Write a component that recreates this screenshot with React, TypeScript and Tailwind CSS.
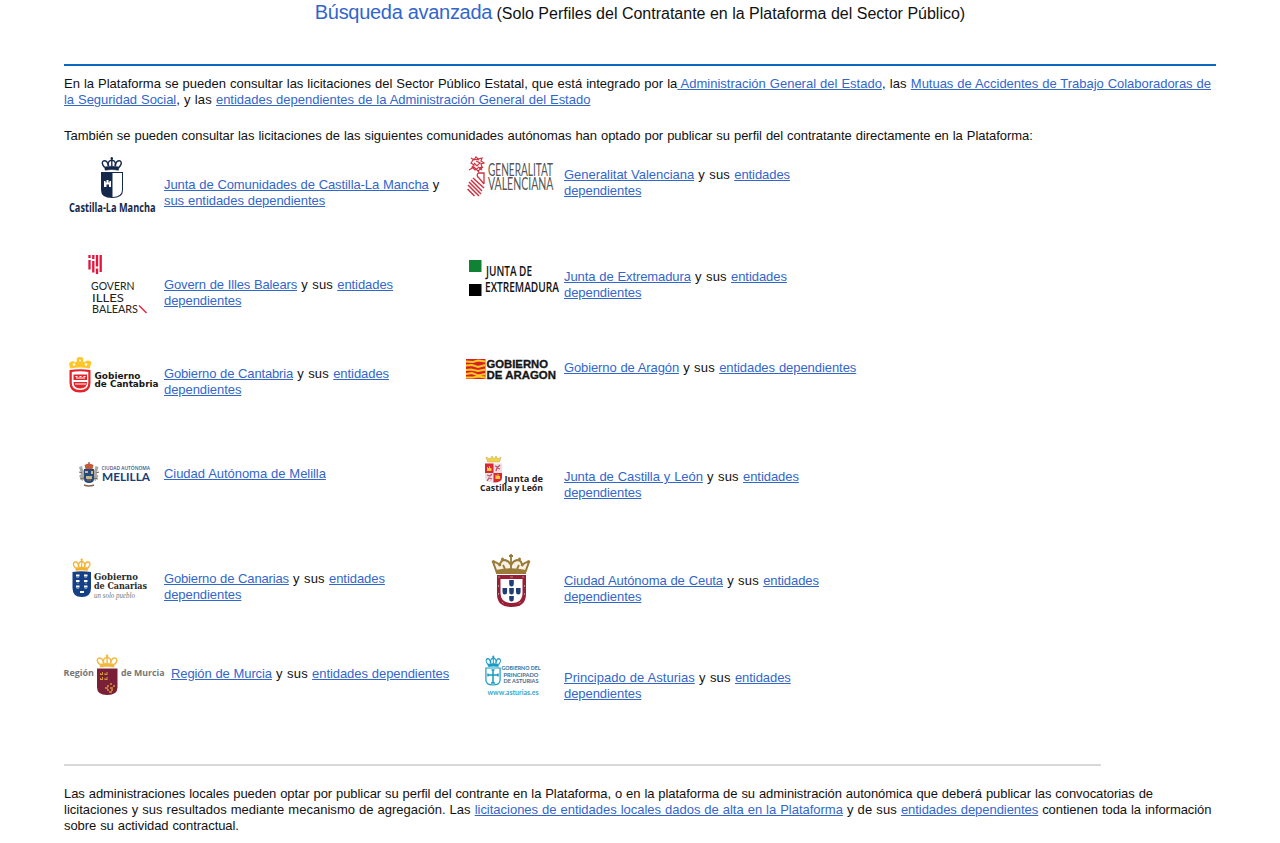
import React from 'react';

type TProps = {
  x: number;
  y: number;
  w: number;
  s: number;
  fill: string;
  children: string;
  weight?: number;
  font?: string;
  italic?: boolean;
};

function T({ x, y, w, s, fill, children, weight = 400, font = 'Open Sans, sans-serif', italic }: TProps) {
  return (
    <text
      x={x}
      y={y}
      textLength={w}
      lengthAdjust="spacingAndGlyphs"
      fontSize={s}
      fontWeight={weight}
      fontFamily={font}
      fontStyle={italic ? 'italic' : 'normal'}
      fill={fill}
    >
      {children}
    </text>
  );
}

function Logo({ children, wide }: { children: React.ReactNode; wide?: boolean }) {
  return (
    <svg
      className={
        wide
          ? 'block h-[70px] w-[107px] shrink-0 overflow-visible [word-spacing:0]'
          : 'block h-[70px] w-[100px] shrink-0 overflow-visible [word-spacing:0]'
      }
      viewBox={wide ? '0 0 107 70' : '0 0 100 70'}
    >
      {children}
    </svg>
  );
}

/* Arched royal crown drawn in a 20x12 box. */
function Crown({ x, y, sx, sy, color }: { x: number; y: number; sx: number; sy: number; color: string }) {
  return (
    <g transform={`translate(${x} ${y}) scale(${sx} ${sy})`} fill="none" stroke={color}>
      <path
        d="M3 8.5C-1 5 1 2.6 4 3.2Q6 3.6 6.5 7.5M17 8.5C21 5 19 2.6 16 3.2Q14 3.6 13.5 7.5M7 7.5C5.5 4 8 2.6 10 2.6S14.5 4 13 7.5M10 0v8M8.8 1.2h2.4"
        strokeWidth="1.3"
      />
      <path d="M3 8.2q7-1.4 14 0l-.6 2.6q-6.4-1.2-12.8 0z" fill={color} strokeWidth=".5" />
    </g>
  );
}

const CastillaLaMancha = () => (
  <Logo>
    <Crown x={37.5} y={7} sx={1.03} sy={1.22} color="#14284b" />
    <path d="M37 22h22v18q0 8-11 8t-11-8z" fill="#14284b" />
    <path d="M48.5 23h9.5v17q0 6.5-9.5 7z" fill="#fff" />
    <path d="M40 37v-6h1.5v1.5h1V30h2v2.5h1V31H47v6h-2v-2.5h-2.5V37z" fill="#fff" />
    <T x={5} y={61.7} w={86.5} s={11.8} weight={700} fill="#14284b">Castilla-La Mancha</T>
  </Logo>
);

const Valenciana = () => (
  <Logo>
    <g fill="none" stroke="#cf3240" strokeWidth="1.2">
      <path d="M7 8l3 2 2-3 2 2 4-1-1 3 3 2-3 1 1 3-3 1M9 10l-2 3 3 2-2 2 3 3 3-2M12 11l4 2-3 3-3-3M5 20l5-3 4 4 5-4M9 9l6 1M14 17l4 3M12 19l3 3" />
      <path d="M14 23h6v11M14 23q-2 3 1 5l5 6" strokeWidth="1.3" />
      <path d="M9 28l11 10M7 30l11 11M5 32l12 12M4 35l11 11M3.5 39l7 7" strokeWidth="1.5" />
    </g>
    <T x={24} y={25.8} w={65} s={17.6} fill="#555" font="Lato, sans-serif">GENERALITAT</T>
    <T x={24} y={40} w={65.5} s={17.6} fill="#555" font="Lato, sans-serif">VALENCIANA</T>
  </Logo>
);

const Balears = () => (
  <Logo>
    <g fill="none" stroke="#e4153d" strokeWidth="2.3">
      <path d="M25.5 10v9.5M29.3 11v11.5M33 5v11.5M36.7 5v17" />
      <path d="M25.5 5v3M29.3 5v4M33 18.5v5.5" />
    </g>
    <T x={27} y={40.4} w={43.5} s={12.2} fill="#222" font="Lato, sans-serif">GOVERN</T>
    <T x={28} y={52} w={32} s={12.2} fill="#222" font="Lato, sans-serif">ILLES</T>
    <T x={28} y={63.4} w={46} s={12.2} fill="#222" font="Lato, sans-serif">BALEARS</T>
    <path d="M75 55.5l7.5 7.5" stroke="#e4153d" strokeWidth="1.2" />
  </Logo>
);

const Extremadura = () => (
  <Logo>
    <path d="M5 10h12.5v12H5z" fill="#118233" />
    <path d="M5 34h12.5v12H5z" fill="#000" />
    <T x={22} y={25.5} w={46} s={14.6} weight={600} fill="#111">JUNTA DE</T>
    <T x={21} y={42.3} w={74} s={14.8} weight={600} fill="#111">EXTREMADURA</T>
  </Logo>
);

const Cantabria = () => (
  <Logo>
    <path
      d="M6 18.5l-1-5q2-3 5-2l2 1 1-2.5-.5-1.5Q14.5 6.5 16 7q3 0 3.5 1.5L19 10l1 2.5q3-3 6-1.5 2 1 .8 3.5l-1 4q-10-2-19.8 0z"
      fill="#ffc629"
    />
    <circle cx="10" cy="14.5" r="1.3" fill="#fff" />
    <circle cx="22" cy="14.5" r="1.3" fill="#fff" />
    <circle cx="16" cy="10.5" r="1" fill="#fff" />
    <path d="M5.5 20q10.5-1.5 21 0v13q0 9.5-10.5 9.5T5.5 33z" fill="#e3242b" />
    <path d="M7.8 22q8-1.3 16.5 0v11q0 7-8.25 7t-8.25-7z" fill="#fff" />
    <path d="M9.5 24.5h13.5v5.5H9.5zM9.5 32h13.5q0 6.5-6.75 6.5T9.5 32z" fill="#e3242b" />
    <path d="M11.5 26.5h2m2 0h2m2 0h2M12 28h9M11 34h11" stroke="#fff" strokeWidth="1" />
    <T x={30.5} y={29} w={46} s={9.2} weight={700} fill="#171717" font="DejaVu Sans, sans-serif">Gobierno</T>
    <T x={30.5} y={37.3} w={64} s={9.2} weight={700} fill="#171717" font="DejaVu Sans, sans-serif">de Cantabria</T>
  </Logo>
);

const Aragon = () => (
  <Logo>
    <path d="M2 9h19.500v20H2z" fill="#d51f2b" />
    <path
      d="M2 11.5l7 .5 5-1.5 7.5 1M2 15.5l6-.5 6 2 7.5-2M2 20l5-.5 7 1.5 7.5-1.5M2 24l6-1 6 2.500 7.500-1.500M2 27.500h7l5-1 7.500 1"
      fill="none"
      stroke="#fbc91f"
      strokeWidth="2"
    />
    <g stroke="#161616" strokeWidth=".35">
      <T x={22.5} y={18.3} w={61.5} s={11.6} weight={700} fill="#161616" font="Liberation Sans, sans-serif">GOBIERNO</T>
      <T x={22.5} y={28.5} w={69.5} s={11.6} weight={700} fill="#161616" font="Liberation Sans, sans-serif">DE ARAGON</T>
    </g>
  </Logo>
);

const Melilla = () => (
  <Logo>
    <path d="M25 12v3" stroke="#a87542" strokeWidth="1.5" />
    <path d="M20.5 15q4.5-3 9 0l-1 4h-7z" fill="#c45a37" />
    <path d="M15 17l3-1 1 4 2 1v8l-3 2-3-5 2-2zM34.5 17l-3-1-1 4-2 1v8l3 2 3-5-2-2z" fill="#a8aaa9" />
    <path d="M15 22l3 1M35 22l-3 1M16 29l4-1M34 29l-4-1" stroke="#7b6651" strokeWidth="1" />
    <path d="M20 19h10v10q0 4-5 4t-5-4z" fill="#28487c" />
    <path d="M21 21h3v2h-3zM27 21h2v3h-2zM22 26h6v3h-6z" fill="#c7b987" />
    <path d="M23 30h4M20 35q5 2 10 0" stroke="#8a604f" strokeWidth="1.5" fill="none" />
    <T x={37.5} y={20} w={48.5} s={5.8} weight={600} fill="#34558c">CIUDAD AUTÓNOMA</T>
    <T x={38} y={31.3} w={48} s={12.2} weight={700} fill="#173d77" font="Lato, sans-serif">MELILLA</T>
  </Logo>
);

const CastillaLeon = () => (
  <Logo>
    <path d="M22 7l1.5 5h12L37 7l-3 2-2-3-2 3-2-3-2 3z" fill="#efd34d" stroke="#c4a34b" strokeWidth=".5" />
    <path d="M21 13.5h17v14q0 5-8.5 5t-8.500-5z" fill="#ecdfe3" />
    <path d="M21 13.5h8.5V23H21zM29.5 23H38v4.500q0 5-8.500 5z" fill="#d72735" />
    <path d="M23 21v-4h1v1h1v-2h1v2h1.5v3zM31.5 29v-4h1v1h1v-2h1v2H36v3z" fill="#f5cf38" />
    <path d="M31 16l3 1 2-2M32 21l1-3 3 1M23 25l3 1 2-2M23 31l2-3 3 1" stroke="#c24e6b" fill="none" strokeWidth="1.3" />
    <T x={40.5} y={32} w={38.5} s={9.2} weight={700} fill="#29211f">Junta de</T>
    <T x={16} y={41.2} w={63} s={9.4} weight={700} fill="#29211f">Castilla y León</T>
  </Logo>
);

const Canarias = () => (
  <Logo>
    <Crown x={8.7} y={8.5} sx={0.9} sy={1.12} color="#f3b12e" />
    <path d="M8.5 22q9-1.5 18.500 0v16q0 9-9.250 9T8.500 38z" fill="#154085" />
    <path d="M12 25.500h3.500m4.500 0h3.500M12 31h3.500m4.500 0h3.500M12 36.500h3.500m4.500 0h3.500M16 42h4" stroke="#fff" strokeWidth="1.8" />
    <path d="M12.500 27.500h2.500m5.500 0h2.500M12.500 33h2.500m5.500 0h2.500M12.500 38.500h2.500m5.500 0h2.500" stroke="#8ba6cf" strokeWidth=".8" />
    <T x={30} y={30.3} w={44} s={9.8} weight={700} fill="#292929" font="DejaVu Serif, serif">Gobierno</T>
    <T x={30} y={39.3} w={53} s={9.8} weight={700} fill="#292929" font="DejaVu Serif, serif">de Canarias</T>
    <T x={30} y={47.5} w={41} s={7.5} italic fill="#777" font="Liberation Serif, serif">un solo pueblo</T>
  </Logo>
);

const Ceuta = () => (
  <Logo>
    <path d="M33 23l-4-11q5 0 7 4 0-6 5-6 4 1 6 5 2-4 6-5 5 0 5 6 2-4 7-4l-4 11z" fill="#f6f1e4" stroke="#9a7a38" strokeWidth="2" />
    <path d="M32 20q15-3.5 30 0v4q-15-3-30 0z" fill="#9a7a38" />
    <path d="M47 4v16M45 6h4M39 15l2 4M55 15l-2 4" stroke="#9a7a38" strokeWidth="1.8" fill="none" />
    <circle cx="29.5" cy="11.5" r="1.5" fill="#9a7a38" />
    <circle cx="38.5" cy="9" r="1.5" fill="#9a7a38" />
    <circle cx="55.5" cy="9" r="1.5" fill="#9a7a38" />
    <circle cx="64.5" cy="11.5" r="1.5" fill="#9a7a38" />
    <path d="M33 25h29v19q0 13-14.5 13T33 44z" fill="#991f36" />
    <path d="M36.5 29h22v14q0 10-11 10t-11-10z" fill="#fff" />
    <path
      d="M45.2 30h4.600v4q0 2.500-2.300 2.500T45.200 34zM45.200 38h4.600v4q0 2.500-2.300 2.500T45.200 42zM45.200 46h4.600v3q0 2.500-2.300 2.500T45.200 49zM38.500 38h4.600v4q0 2.500-2.300 2.500T38.500 42zM52 38h4.600v4q0 2.500-2.300 2.500T52 42z"
      fill="#203f78"
    />
    <path d="M34 27h2m10 0h3m9 0h2M34.5 35v2m0 6v2M60.5 35v2m0 6v2M38 52l1.5 1.5m17-1.5-1.5 1.5" stroke="#c5817e" strokeWidth="1" />
  </Logo>
);

const Murcia = () => (
  <Logo wide>
    <T x={-0.5} y={26.3} w={30.5} s={9.4} weight={700} fill="#777">Región</T>
    <Crown x={32.5} y={4.5} sx={1.06} sy={1.17} color="#f2b83f" />
    <path d="M33 18.5h20.500v19q0 7.500-10.250 7.500T33 37.500z" fill="#792038" />
    <path
      d="M36 25v-2h1v1h1v-2h1v3zm4.500 0v-2h1v1h1v-2h1v3zM36 30v-2h1v1h1v-2h1v3zm4.500 0v-2h1v1h1v-2h1v3z"
      fill="#d59637"
    />
    <path d="M46 34h2m-5 2h2m4 0h2M41 38h3m2 0h3M43 40h2m2 0h2M45 42h3" stroke="#d59637" strokeWidth="1.3" />
    <T x={57} y={26.3} w={43.5} s={9.4} weight={700} fill="#777">de Murcia</T>
  </Logo>
);

const Asturias = () => (
  <Logo>
    <Crown x={21.5} y={5.5} sx={0.78} sy={1.05} color="#189bc4" />
    <path d="M21.9 18h14.200v12q0 5-7.100 5t-7.100-5z" fill="#fff" stroke="#189bc4" strokeWidth="1.2" />
    <path d="M29 19.5v13.500M24 25h10M27.500 20h3M27 33h4M24 23.500v3M34 23.500v3" fill="none" stroke="#189bc4" strokeWidth="1.5" />
    <T x={37.5} y={20} w={39} s={5.5} weight={700} fill="#386d91" font="Lato, sans-serif">GOBIERNO DEL</T>
    <T x={39.5} y={26.7} w={35} s={5.7} weight={700} fill="#386d91" font="Lato, sans-serif">PRINCIPADO</T>
    <T x={39.5} y={33.3} w={35} s={5.7} weight={700} fill="#386d91" font="Lato, sans-serif">DE ASTURIAS</T>
    <T x={23.5} y={45} w={51} s={7} weight={700} fill="#36a9cd" font="Lato, sans-serif">www.asturias.es</T>
  </Logo>
);

function A({ children, track = 'tracking-[-0.02px]' }: { children: React.ReactNode; track?: string }) {
  return (
    <a href="#" className={`text-[#3366cc] underline ${track}`}>
      {children}
    </a>
  );
}

type RegionProps = {
  logo: React.ReactNode;
  pad: string;
  track: string;
  name: string;
  own?: boolean;
  link?: string;
};

function Region({ logo, pad, track, name, own, link }: RegionProps) {
  return (
    <div className="flex h-[100px] w-[400px] items-start">
      {logo}
      <p className={`min-w-0 flex-1 ${pad}`}>
        <A track={track}>{name}</A>
        {link && (
          <>
            <span className="tracking-[0.2px]">{own ? ' y ' : ' y sus '}</span>
            <A track="tracking-[-0.06px]">{link}</A>
          </>
        )}
      </p>
    </div>
  );
}

export default function App() {
  const deps = 'entidades dependientes';
  return (
    <main className="h-[843px] overflow-hidden bg-white px-16 font-['Liberation_Sans',Arial,sans-serif] text-[13px] leading-4 text-[#111] [word-spacing:0.39px]">
      <h1 className="h-16 text-center text-base leading-6 [word-spacing:0]">
        <a href="#" className="text-xl leading-6 tracking-[-0.3px] text-[#3366cc]">Búsqueda avanzada</a> (Solo Perfiles del Contratante en la Plataforma del Sector Público)
      </h1>
      <hr className="h-0.5 border-0 bg-[#0d68bf]" />
      <p className="pt-2.5">
        En la Plataforma se pueden consultar las licitaciones del Sector Público Estatal, que está integrado por la
        <A track="tracking-normal"> Administración General del Estado</A>
        <span className="tracking-[0.12px]">, las </span>
        <A track="tracking-[-0.03px]">Mutuas de Accidentes de Trabajo Colaboradoras de la Seguridad Social</A>
        <span className="tracking-[0.12px]">, y las </span>
        <A>entidades dependientes de la Administración General del Estado</A>
      </p>
      <p className="pt-5 tracking-[-0.036px]">
        También se pueden consultar las licitaciones de las siguientes comunidades autónomas han optado por publicar su perfil del contratante directamente en la Plataforma:
      </p>
      <section className="mt-1.5 grid w-[800px] grid-cols-2">
        <Region logo={<CastillaLaMancha />} pad="pr-3 pt-[27px]" track="tracking-[-0.094px]" name="Junta de Comunidades de Castilla-La Mancha" own link="sus entidades dependientes" />
        <Region logo={<Valenciana />} pad="pt-[17px]" track="tracking-[-0.04px]" name="Generalitat Valenciana" link={deps} />
        <Region logo={<Balears />} pad="pt-[27px]" track="tracking-[-0.14px]" name="Govern de Illes Balears" link={deps} />
        <Region logo={<Extremadura />} pad="pt-[19px]" track="tracking-[-0.09px]" name="Junta de Extremadura" link={deps} />
        <Region logo={<Cantabria />} pad="pt-4" track="tracking-[-0.155px]" name="Gobierno de Cantabria" link={deps} />
        <Region logo={<Aragon />} pad="pt-2.5" track="tracking-[-0.12px]" name="Gobierno de Aragón" link={deps} />
        <Region logo={<Melilla />} pad="pt-4" track="tracking-[-0.045px]" name="Ciudad Autónoma de Melilla" />
        <Region logo={<CastillaLeon />} pad="pt-[19px]" track="tracking-[-0.06px]" name="Junta de Castilla y León" link={deps} />
        <Region logo={<Canarias />} pad="pt-[21px]" track="tracking-[-0.155px]" name="Gobierno de Canarias" link={deps} />
        <Region logo={<Ceuta />} pad="pt-[23px]" track="tracking-[-0.08px]" name="Ciudad Autónoma de Ceuta" link={deps} />
        <Region logo={<Murcia />} pad="pt-4" track="tracking-[-0.11px]" name="Región de Murcia" link={deps} />
        <Region logo={<Asturias />} pad="pt-5" track="tracking-[0.03px]" name="Principado de Asturias" link={deps} />
      </section>
      <hr className="mt-[14px] h-0.5 w-[1037px] border-0 bg-[#d8d8d8]" />
      <p className="pt-5">
        <span className="tracking-[-0.06px]">
          Las administraciones locales pueden optar por publicar su perfil del contrante en la Plataforma, o en la plataforma de su administración autonómica que deberá publicar las convocatorias de{' '}
        </span>
        <span className="tracking-[0.015px]">licitaciones y sus resultados mediante mecanismo de agregación. Las </span>
        <A track="tracking-[-0.015px]">licitaciones de entidades locales dados de alta en la Plataforma</A>
        <span className="tracking-[0.08px]"> y de sus </span>
        <A track="tracking-[-0.05px]">entidades dependientes</A>
        <span className="tracking-[-0.06px]"> contienen toda la información sobre su actividad contractual.</span>
      </p>
    </main>
  );
}
